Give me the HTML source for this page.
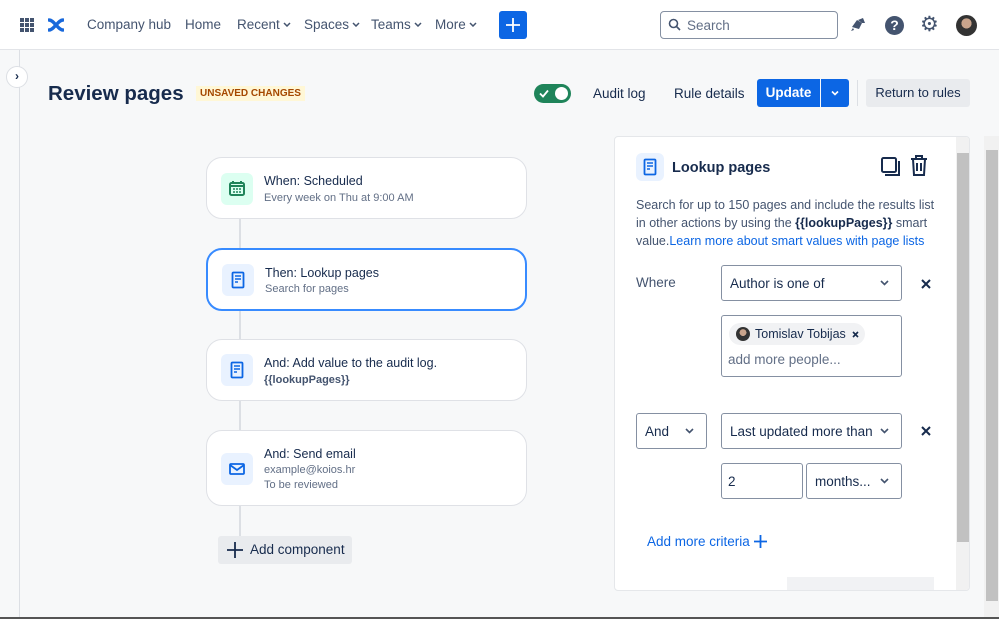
<!DOCTYPE html>
<html><head><meta charset="utf-8"><style>
*{box-sizing:border-box;margin:0;padding:0}
body{width:999px;height:619px;overflow:hidden;background:#f7f8f9;font-family:"Liberation Sans",sans-serif;color:#172b4d;position:relative;font-size:14px}
.a{position:absolute}
.hdr{left:0;top:0;width:999px;height:50px;background:#fff;border-bottom:1px solid #e2e4e8}
.nav{top:17px;font-size:13.5px;color:#44546f;white-space:nowrap}
.nav svg{margin-left:3px;vertical-align:2px}
.card{background:#fff;border:1px solid #dfe1e6;border-radius:16px;left:206px;width:321px}
.ic{left:14px;width:32px;height:32px;border-radius:6px;background:#e9f2ff}
.t1{left:57px;font-size:12.5px;color:#172b4d;white-space:nowrap}
.t2{left:57px;font-size:11px;color:#626f86}
.box{border:1px solid #8590a2;border-radius:3px;background:#fff;font-size:13.5px;color:#172b4d;white-space:nowrap}
.chev{position:absolute;right:12px;top:50%;margin-top:-3px}
</style></head><body>
<div class="a hdr"></div>
<div class="a" style="left:20px;top:18px;width:14px;height:14px;display:grid;grid-template-columns:repeat(3,4px);gap:1px">
<i style="background:#44546f"></i><i style="background:#44546f"></i><i style="background:#44546f"></i><i style="background:#44546f"></i><i style="background:#44546f"></i><i style="background:#44546f"></i><i style="background:#44546f"></i><i style="background:#44546f"></i><i style="background:#44546f"></i></div>
<svg class="a" style="left:48px;top:17px" width="16" height="16" viewBox="0 0 16 16"><path d="M1 3c3 0 5 3 7 5s4 5 7 5M1 13c3 0 5-3 7-5s4-5 7-5" stroke="#1868db" stroke-width="3.4" fill="none" stroke-linecap="round"/></svg>
<div class="a nav" style="left:87px">Company hub</div>
<div class="a nav" style="left:185px">Home</div>
<div class="a nav" style="left:237px">Recent<svg width="8" height="5"><path d="M1 1l3 3 3-3" stroke="#44546f" stroke-width="1.5" fill="none"/></svg></div>
<div class="a nav" style="left:304px">Spaces<svg width="8" height="5"><path d="M1 1l3 3 3-3" stroke="#44546f" stroke-width="1.5" fill="none"/></svg></div>
<div class="a nav" style="left:371px">Teams<svg width="8" height="5"><path d="M1 1l3 3 3-3" stroke="#44546f" stroke-width="1.5" fill="none"/></svg></div>
<div class="a nav" style="left:435px">More<svg width="8" height="5"><path d="M1 1l3 3 3-3" stroke="#44546f" stroke-width="1.5" fill="none"/></svg></div>
<div class="a" style="left:499px;top:11px;width:28px;height:28px;background:#0c66e4;border-radius:3px"><svg width="28" height="28"><path d="M14 7v14M7 14h14" stroke="#fff" stroke-width="1.8"/></svg></div>
<div class="a" style="left:660px;top:11px;width:178px;height:28px;border:1px solid #8590a2;border-radius:4px;background:#fff;color:#626f86;font-size:13.5px;padding:6px 0 0 26px">Search</div>
<svg class="a" style="left:668px;top:18px" width="13" height="13"><circle cx="5.5" cy="5.5" r="4" stroke="#44546f" stroke-width="1.6" fill="none"/><path d="M8.5 8.5l3.5 3.5" stroke="#44546f" stroke-width="1.6"/></svg>
<svg class="a" style="left:850px;top:16px" width="17" height="17" viewBox="0 0 17 17"><path d="M2 11l5-7 5 3-3 6zM3 12l-2 3 3-1" fill="#44546f"/><path d="M8 4l5-2 2 5-3 0z" fill="#44546f"/></svg>
<div class="a" style="left:885px;top:16px;width:19px;height:19px;border-radius:50%;background:#44546f;color:#fff;font-weight:bold;font-size:14px;text-align:center;line-height:19px">?</div>
<div class="a" style="left:920px;top:14px;font-size:21px;color:#44546f;line-height:22px">⚙</div>
<div class="a" style="left:956px;top:15px;width:21px;height:21px;border-radius:50%;background:radial-gradient(circle at 50% 40%,#c9a48c 0 30%,#333 32%);"></div>
<div class="a" style="left:19px;top:50px;width:1px;height:569px;background:#dcdfe4"></div>
<div class="a" style="left:6px;top:66px;width:22px;height:22px;border-radius:50%;background:#fff;border:1px solid #dcdfe4;text-align:center;font-size:12px;line-height:19px;font-weight:bold">›</div>
<div class="a" style="left:48px;top:82px;font-size:20.5px;font-weight:bold;color:#172b4d">Review pages</div>
<div class="a" style="left:196px;top:86px;background:#fff7d6;color:#a54800;font-size:10px;font-weight:bold;padding:2px 4px">UNSAVED CHANGES</div>
<div class="a" style="left:534px;top:84px;width:37px;height:19px;border-radius:10px;background:#1f845a"><div class="a" style="right:3px;top:3px;width:13px;height:13px;border-radius:50%;background:#fff"></div><svg class="a" style="left:5px;top:5px" width="10" height="9"><path d="M1 4.5l3 3 5-6" stroke="#fff" stroke-width="1.8" fill="none"/></svg></div>
<div class="a" style="left:593px;top:86px;font-size:13.5px;color:#172b4d">Audit log</div>
<div class="a" style="left:674px;top:86px;font-size:13.5px;color:#172b4d">Rule details</div>
<div class="a" style="left:757px;top:79px;width:63px;height:28px;background:#0c66e4;border-radius:3px 0 0 3px;color:#fff;font-weight:bold;font-size:13.5px;text-align:center;line-height:28px">Update</div>
<div class="a" style="left:821px;top:79px;width:28px;height:28px;background:#0c66e4;border-radius:0 3px 3px 0"><svg width="28" height="28"><path d="M11 12.5l3 3 3-3" stroke="#fff" stroke-width="1.6" fill="none"/></svg></div>
<div class="a" style="left:857px;top:80px;width:1px;height:26px;background:#dcdfe4"></div>
<div class="a" style="left:866px;top:79px;width:104px;height:28px;background:#e9ebee;border-radius:3px;font-size:13px;text-align:center;line-height:28px">Return to rules</div>

<div class="a" style="left:239px;top:218px;width:2px;height:320px;background:#dcdfe4"></div>
<div class="a card" style="top:157px;height:62px"><div class="a ic" style="top:15px;background:#dcfff1"><svg width="32" height="32"><rect x="9" y="10" width="14" height="12" rx="1.5" fill="none" stroke="#1f845a" stroke-width="2"/><path d="M9 13h14M12 8v3M20 8v3" stroke="#1f845a" stroke-width="2"/><path d="M12 16h2M15 16h2M18 16h2M12 19h2M15 19h2M18 19h2" stroke="#1f845a" stroke-width="1.5"/></svg></div><div class="a t1" style="top:16px">When: Scheduled</div><div class="a t2" style="top:34px">Every week on Thu at 9:00 AM</div></div>
<div class="a card" style="top:248px;height:63px;border:2px solid #388bff"><div class="a ic" style="top:14px"><svg width="32" height="32"><rect x="10.5" y="8.5" width="11" height="15" rx="1" fill="none" stroke="#0c66e4" stroke-width="1.8"/><path d="M13 12h6M13 15h6M13 18h3" stroke="#0c66e4" stroke-width="1.5"/></svg></div><div class="a t1" style="top:16px">Then: Lookup pages</div><div class="a t2" style="top:33px">Search for pages</div></div>
<div class="a card" style="top:339px;height:62px"><div class="a ic" style="top:14px"><svg width="32" height="32"><rect x="10.5" y="8.5" width="11" height="15" rx="1" fill="none" stroke="#0c66e4" stroke-width="1.8"/><path d="M13 12h6M13 15h6M13 18h3" stroke="#0c66e4" stroke-width="1.5"/></svg></div><div class="a t1" style="top:16px">And: Add value to the audit log.</div><div class="a t2" style="top:34px;font-weight:bold;color:#44546f">{{lookupPages}}</div></div>
<div class="a card" style="top:430px;height:76px"><div class="a ic" style="top:22px"><svg width="32" height="32"><rect x="9" y="11" width="14" height="10" rx="1" fill="none" stroke="#0c66e4" stroke-width="1.8"/><path d="M9 12l7 5 7-5" stroke="#0c66e4" stroke-width="1.8" fill="none"/></svg></div><div class="a t1" style="top:16px">And: Send email</div><div class="a t2" style="top:33px">example@koios.hr</div><div class="a t2" style="top:48px">To be reviewed</div></div>
<div class="a" style="left:218px;top:536px;width:134px;height:28px;background:#e9ebee;border-radius:3px;font-size:13.5px;line-height:28px;padding-left:32px">Add component</div>
<svg class="a" style="left:226px;top:541px" width="18" height="18"><path d="M9 1v16M1 9h16" stroke="#172b4d" stroke-width="1.8"/></svg>

<div class="a" style="left:614px;top:136px;width:356px;height:455px;background:#fff;border:1px solid #e5e7ea;border-radius:4px;overflow:hidden">
<div class="a" style="left:21px;top:16px;width:28px;height:28px;border-radius:6px;background:#e9f2ff"><svg width="28" height="28"><rect x="8.5" y="6.5" width="11" height="15" rx="1" fill="none" stroke="#0c66e4" stroke-width="1.8"/><path d="M11 10h6M11 13h6M11 16h3" stroke="#0c66e4" stroke-width="1.5"/></svg></div>
<div class="a" style="left:57px;top:23px;font-size:14.5px;font-weight:bold">Lookup pages</div>
<svg class="a" style="left:265px;top:19px" width="22" height="22"><rect x="2" y="2" width="14" height="14" rx="1.5" fill="none" stroke="#172b4d" stroke-width="2"/><path d="M19 5v14H5" stroke="#172b4d" stroke-width="2" fill="none"/></svg>
<svg class="a" style="left:293px;top:17px" width="22" height="24"><path d="M3 5h16M8 5V2h6v3M5 5l1 16h10l1-16M9 9v8M13 9v8" stroke="#172b4d" stroke-width="2" fill="none"/></svg>
<div class="a" style="left:21px;top:59px;width:300px;font-size:12.5px;line-height:18px;color:#44546f">Search for up to 150 pages and include the results list in other actions by using the <b style="color:#172b4d">{{lookupPages}}</b> smart value.<span style="color:#0c66e4">Learn more about smart values with page lists</span></div>
<div class="a" style="left:21px;top:138px;font-size:13.5px;color:#44546f">Where</div>
<div class="a box" style="left:106px;top:128px;width:181px;height:36px;padding:10px 8px">Author is one of<svg class="chev" width="9" height="6"><path d="M1 1l3.5 3.5L8 1" stroke="#44546f" stroke-width="1.6" fill="none"/></svg></div>
<svg class="a" style="left:306px;top:142px" width="10" height="10"><path d="M1 1l8 8M9 1l-8 8" stroke="#172b4d" stroke-width="2"/></svg>
<div class="a box" style="left:106px;top:178px;width:181px;height:62px"><div class="a" style="left:7px;top:7px;width:136px;height:22px;background:#f1f2f4;border-radius:11px;padding:4px 0 0 26px;font-size:12.5px;white-space:nowrap">Tomislav Tobijas</div><svg class="a" style="left:130px;top:15px" width="7" height="7"><path d="M1 1l5 5M6 1l-5 5" stroke="#172b4d" stroke-width="1.6"/></svg><div class="a" style="left:14px;top:11px;width:14px;height:14px;border-radius:50%;background:radial-gradient(circle at 50% 40%,#c9a48c 0 30%,#333 32%)"></div><div class="a" style="left:6px;top:36px;color:#626f86;font-size:13.5px">add more people...</div></div>
<div class="a box" style="left:21px;top:276px;width:71px;height:36px;padding:10px 8px">And<svg class="chev" width="9" height="6"><path d="M1 1l3.5 3.5L8 1" stroke="#44546f" stroke-width="1.6" fill="none"/></svg></div>
<div class="a box" style="left:106px;top:276px;width:181px;height:36px;padding:10px 8px">Last updated more than<svg class="chev" width="9" height="6"><path d="M1 1l3.5 3.5L8 1" stroke="#44546f" stroke-width="1.6" fill="none"/></svg></div>
<svg class="a" style="left:306px;top:289px" width="10" height="10"><path d="M1 1l8 8M9 1l-8 8" stroke="#172b4d" stroke-width="2"/></svg>
<div class="a box" style="left:106px;top:326px;width:82px;height:36px;padding:10px 6px">2</div>
<div class="a box" style="left:191px;top:326px;width:96px;height:36px;padding:10px 8px">months...<svg class="chev" width="9" height="6"><path d="M1 1l3.5 3.5L8 1" stroke="#44546f" stroke-width="1.6" fill="none"/></svg></div>
<div class="a" style="left:32px;top:397px;font-size:13.5px;color:#0c66e4">Add more criteria</div>
<svg class="a" style="left:139px;top:398px" width="13" height="13"><path d="M6.5 0v13M0 6.5h13" stroke="#0c66e4" stroke-width="1.8"/></svg>
<div class="a" style="left:172px;top:440px;width:147px;height:20px;background:#f1f2f4"></div>
<div class="a" style="left:341px;top:0;width:15px;height:455px;background:#f1f1f1"></div>
<div class="a" style="left:342px;top:16px;width:12px;height:389px;background:#c1c1c1"></div>
</div>
<div class="a" style="left:984px;top:136px;width:15px;height:483px;background:#f1f1f1"></div>
<div class="a" style="left:986px;top:150px;width:12px;height:451px;background:#c1c1c1"></div>
<div class="a" style="left:0;top:617px;width:999px;height:2px;background:#555"></div>
</body></html>
